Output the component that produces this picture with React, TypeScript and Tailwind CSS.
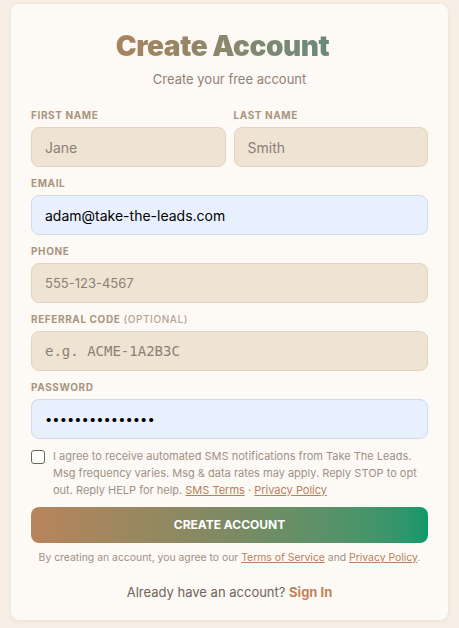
import { useState } from "react";

const font = { fontFamily: "Inter, 'Noto Sans', sans-serif" };

function Label({ children }: { children: React.ReactNode }) {
  return (
    <label className="mb-[5px] block text-[10px] font-bold uppercase leading-[14px] tracking-[0.06em] text-[#a8957f]">
      {children}
    </label>
  );
}

const beige =
  "h-10 w-full rounded-lg border border-[#e3d4c0] bg-[#efe3d3] px-[13px] text-sm text-[#3a2f26] outline-none placeholder:text-[#8c8075]";
const filled =
  "h-10 w-full rounded-lg border border-[#cfdaea] bg-[#e8f0fe] px-[13px] text-sm text-black outline-none";

export default function App() {
  const [agree, setAgree] = useState(false);

  return (
    <div className="min-h-screen bg-[#f7efe6] px-[11px] pt-1 pb-[7px]" style={font}>
      <div className="rounded-lg bg-[#fdf9f4] px-5 pt-6 pb-[18px] shadow-[0_1px_4px_rgba(120,90,60,0.12)]">
        <h1 className="pr-[14px] text-center text-[28px] leading-9">
          <span className="inline-block bg-gradient-to-r from-[#a8835c] to-[#69897a] bg-clip-text font-black tracking-[-0.015em] text-transparent">
            Create Account
          </span>
        </h1>
        <p className="mt-[5px] text-center text-[13px] leading-5 text-[#8e8277]">Create your free account</p>

        <form className="mt-[19px] flex flex-col gap-[9px]" onSubmit={(e) => e.preventDefault()}>
          <div className="grid grid-cols-2 gap-2">
            <div>
              <Label>First Name</Label>
              <input className={beige} placeholder="Jane" />
            </div>
            <div>
              <Label>Last Name</Label>
              <input className={beige} placeholder="Smith" />
            </div>
          </div>
          <div>
            <Label>Email</Label>
            <input className={filled} defaultValue="adam@take-the-leads.com" />
          </div>
          <div>
            <Label>Phone</Label>
            <input className={beige + " text-[13px]"} placeholder="555-123-4567" />
          </div>
          <div>
            <Label>
              Referral Code <span className="font-medium text-[#b3a595]">(Optional)</span>
            </Label>
            <input
              className={beige}
              style={{ fontFamily: "'DejaVu Sans Mono', monospace" }}
              placeholder="e.g. ACME-1A2B3C"
            />
          </div>
          <div>
            <Label>Password</Label>
            <input type="password" className={filled + " text-[13px]"} defaultValue="aaaaaaaaaaaaaaa" />
          </div>

          <div className="flex items-start gap-2">
            <input
              type="checkbox"
              checked={agree}
              onChange={(e) => setAgree(e.target.checked)}
              className="mt-[2px] h-[14px] w-[14px] shrink-0 appearance-none rounded-[3px] border border-[#6b6560] bg-white"
            />
            <p className="text-[11px] leading-[17px] text-[#9d9186]">
              I agree to receive automated SMS notifications from Take The Leads. Msg frequency varies. Msg &amp; data
              rates may apply. Reply STOP to opt out. Reply HELP for help.{" "}
              <a href="#" className="text-[#b9805b] underline">
                SMS Terms
              </a>{" "}
              ·{" "}
              <a href="#" className="text-[#b9805b] underline">
                Privacy Policy
              </a>
            </p>
          </div>

          <button
            type="submit"
            className="mt-[-1px] h-9 w-full rounded-lg bg-gradient-to-r from-[#b8845c] via-[#7c8a63] to-[#0f986d] text-xs font-bold uppercase text-white"
          >
            Create Account
          </button>
        </form>

        <p className="mt-[7px] text-center text-[10.4px] leading-4 text-[#9d9186]">
          By creating an account, you agree to our{" "}
          <a href="#" className="text-[#b9805b] underline">
            Terms of Service
          </a>{" "}
          and{" "}
          <a href="#" className="text-[#b9805b] underline">
            Privacy Policy
          </a>
          .
        </p>

        <p className="mt-4 text-center text-[13px] leading-5 text-[#6f645b]">
          Already have an account?{" "}
          <a href="#" className="font-bold text-[#c0845c]">
            Sign In
          </a>
        </p>
      </div>
    </div>
  );
}
